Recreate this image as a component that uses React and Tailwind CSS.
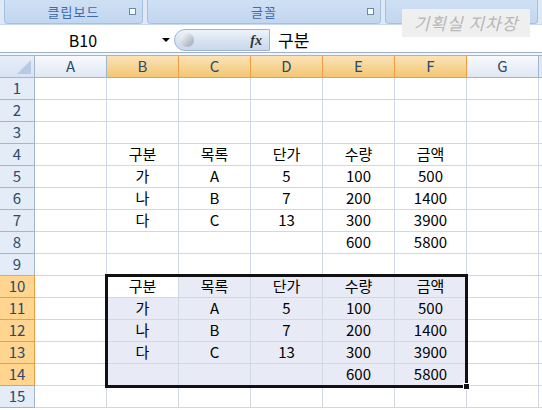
import React from 'react';

const cols = ['A', 'B', 'C', 'D', 'E', 'F', 'G'];

const table = [
  ['구분', '목록', '단가', '수량', '금액'],
  ['가', 'A', '5', '100', '500'],
  ['나', 'B', '7', '200', '1400'],
  ['다', 'C', '13', '300', '3900'],
  ['', '', '', '600', '5800'],
];

const rowData = (r) => {
  if (r >= 4 && r <= 8) return table[r - 4];
  if (r >= 10 && r <= 14) return table[r - 10];
  return null;
};

const font = { fontFamily: '"Noto Sans CJK KR", "Noto Sans", sans-serif' };

const Ribbon = () => (
  <div className="h-[25px] bg-[#dfe9f5] flex gap-[4px] px-[4px] border-b border-[#c9d9ee]">
    <div className="w-[139px] h-[24px] rounded-b-[4px] border border-t-0 border-[#a6c0e0] bg-gradient-to-b from-[#cfe0f4] to-[#c2d6ef] relative flex items-center justify-center">
      <span className="text-[13px] text-[#3e6aaa] tracking-[1px]">클립보드</span>
      <span className="absolute right-[6px] top-[8px] w-[7px] h-[7px] border border-[#6a86aa] bg-white"></span>
    </div>
    <div className="w-[234px] h-[24px] rounded-b-[4px] border border-t-0 border-[#a6c0e0] bg-gradient-to-b from-[#cfe0f4] to-[#c2d6ef] relative flex items-center justify-center">
      <span className="text-[13px] text-[#3e6aaa] tracking-[1px]">글꼴</span>
      <span className="absolute right-[6px] top-[8px] w-[7px] h-[7px] border border-[#6a86aa] bg-white"></span>
    </div>
    <div className="flex-1 h-[24px] rounded-b-[4px] border border-t-0 border-[#a6c0e0] bg-gradient-to-b from-[#cfe0f4] to-[#c2d6ef]"></div>
  </div>
);

const FormulaBar = () => (
  <div className="h-[26px] flex items-stretch bg-white border-b border-[#9fb1c9] pt-[1px]">
    <div className="w-[174px] flex items-center relative">
      <span className="flex-1 text-center text-[16px] text-black pr-[8px]">B10</span>
      <span className="absolute right-[4px] top-[10px] w-0 h-0 border-l-[4px] border-r-[4px] border-t-[4px] border-l-transparent border-r-transparent border-t-black"></span>
    </div>
    <div className="w-[96px] my-[1px] rounded-l-[14px] border border-[#9fb3cf] bg-gradient-to-b from-[#eef3fa] via-[#d9e4f2] to-[#c8d8ec] flex items-center px-[5px]">
      <span className="w-[14px] h-[14px] rounded-full bg-gradient-to-br from-[#ffffff] to-[#9aa4b0]"></span>
      <span className="ml-auto text-[14px] italic font-bold text-[#333] pr-[2px]" style={{ fontFamily: '"Liberation Serif", serif' }}>fx</span>
    </div>
    <div className="flex-1 flex items-center pl-[8px] text-[17px] text-black">구분</div>
  </div>
);

export default function App() {
  const rows = Array.from({ length: 15 }, (_, i) => i + 1);
  return (
    <div className="w-[542px] h-[410px] overflow-hidden bg-white relative" style={font}>
      <Ribbon />
      <div className="h-[2px] bg-white"></div>
      <FormulaBar />
      <div className="h-[3px] bg-[#f2f5fa] border-b border-[#a3b5cc]"></div>

      <div className="relative">
        <div className="grid grid-cols-[35px_repeat(7,72px)_3px] auto-rows-[22px]">
          <div className="bg-gradient-to-b from-[#e6eef9] to-[#d8e3f2] border-r border-b border-[#9eb6ce] relative">
            <span className="absolute right-[3px] bottom-[3px] w-0 h-0 border-b-[14px] border-l-[14px] border-b-[#b7c9e3] border-l-transparent"></span>
          </div>
          {cols.map((c, i) => {
            const sel = i >= 1 && i <= 5;
            return (
              <div
                key={c}
                className={
                  sel
                    ? 'flex items-center justify-center text-[15px] text-[#2b4a6b] bg-gradient-to-b from-[#fbe3b8] to-[#f3c672] border-r border-b border-[#f29b3f]'
                    : 'flex items-center justify-center text-[15px] text-[#2b4a6b] bg-gradient-to-b from-[#f7f9fc] to-[#e1e8f2] border-r border-b border-[#9eb6ce]'
                }
              >
                {c}
              </div>
            );
          })}
          <div className="bg-[#e1e8f2] border-b border-[#9eb6ce]"></div>

          {rows.map((r) => {
            const selRow = r >= 10 && r <= 14;
            const d = rowData(r);
            return (
              <React.Fragment key={r}>
                <div
                  className={
                    selRow
                      ? 'flex items-center justify-center text-[15px] text-[#2b4a6b] bg-[#ffd590] border-r border-b border-[#f29b3f]'
                      : 'flex items-center justify-center text-[15px] text-[#2b4a6b] bg-[#e4ecf7] border-r border-b border-[#9eb6ce]'
                  }
                >
                  {r}
                </div>
                {cols.map((c, i) => {
                  const inSel = selRow && i >= 1 && i <= 5;
                  const active = r === 10 && i === 1;
                  const val = d && i >= 1 && i <= 5 ? d[i - 1] : '';
                  return (
                    <div
                      key={c}
                      className={
                        inSel && !active
                          ? 'flex items-center justify-center text-[15px] text-black bg-[#e8ebf5] border-r border-b border-[#d0d7e5]'
                          : 'flex items-center justify-center text-[15px] text-black bg-white border-r border-b border-[#d0d7e5]'
                      }
                    >
                      {val}
                    </div>
                  );
                })}
                <div className="border-b border-[#d0d7e5]"></div>
              </React.Fragment>
            );
          })}
        </div>

        <div className="absolute left-[105px] top-[218px] w-[363px] h-[114px] border-[3px] border-[#111] pointer-events-none"></div>
        <div className="absolute left-[463px] top-[327px] w-[7px] h-[7px] bg-[#111] border border-white"></div>
      </div>

      <div className="absolute left-[402px] top-[9px] w-[128px] h-[28px] bg-[#efefef] flex items-center justify-center">
        <span className="text-[17px] italic text-[#b8b8b8] tracking-[1px]">기획실 지차장</span>
      </div>
    </div>
  );
}
